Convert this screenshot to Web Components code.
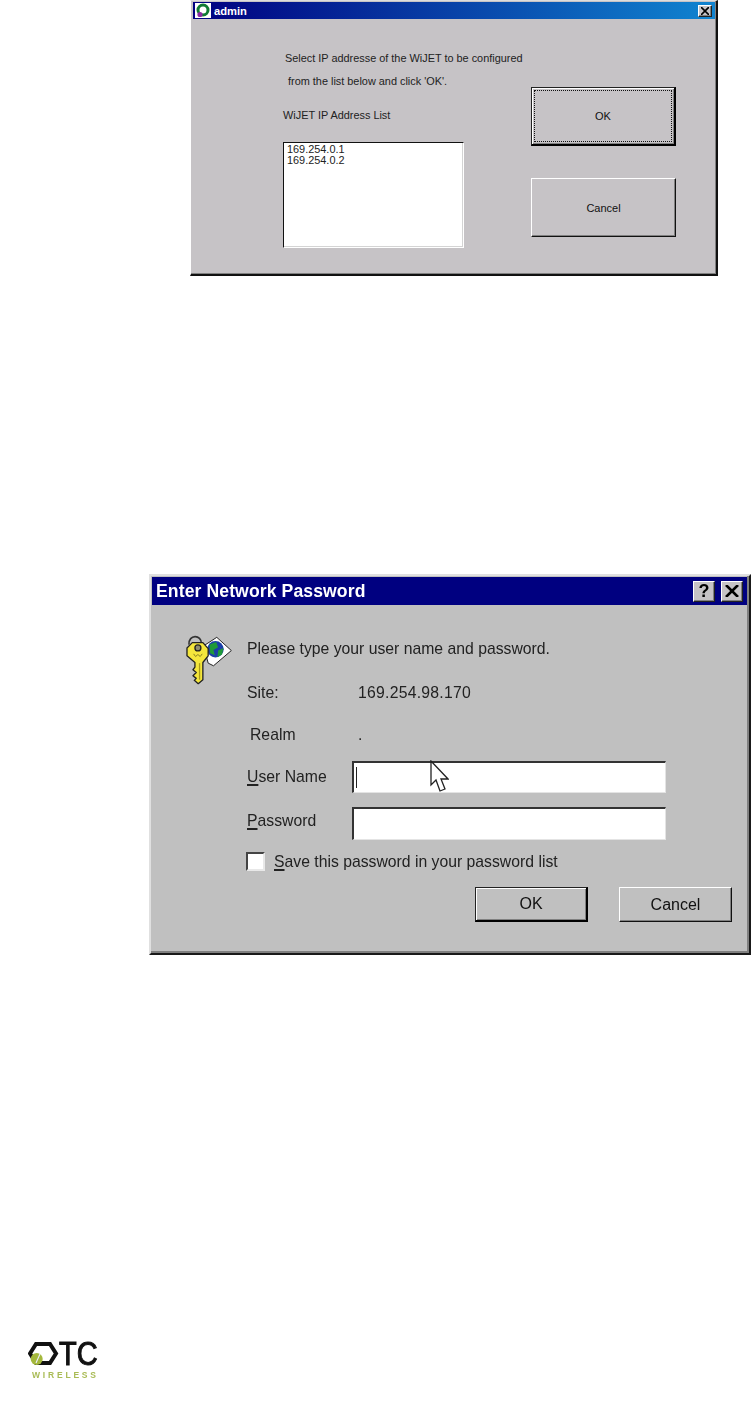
<!DOCTYPE html>
<html>
<head>
<meta charset="utf-8">
<title>Dialogs</title>
<style>
html, body { margin: 0; padding: 0; background: #fff; }
body { font-family: "Liberation Sans", Arial, sans-serif; color: #111; }
admin-dialog { margin-left: 190px; }
password-dialog { margin: 298px 0 0 149px; }
otc-logo { margin: 377px 0 0 28px; }
</style>
</head>
<body>
<admin-dialog></admin-dialog>
<password-dialog></password-dialog>
<otc-logo></otc-logo>

<script>
// small helper so every element gets an open shadow root from a string
function shadow(el, html) {
	const root = el.attachShadow({ mode: 'open' });
	root.innerHTML = html;
	return root;
}

class WinButton extends HTMLElement {
	connectedCallback() {
		shadow(this, `
		<style>
		:host {
			display: flex;
			align-items: center;
			justify-content: center;
			box-sizing: border-box;
			width: var(--w, 113px);
			height: var(--h, 35px);
			font-size: var(--fs, 16px);
			background: var(--face, #c0c0c0);
			color: #111;
			border: 1px solid;
			border-color: #fff #111 #111 #fff;
			box-shadow: inset -1px -1px 0 #808080;
		}
		:host([default]) {
			border-color: #222 #000 #000 #222;
			border-width: 1px 2px 2px 1px;
			box-shadow: inset 1px 1px 0 #fff, inset -1px -1px 0 #808080;
		}
		.focus {
			display: flex;
			align-items: center;
			justify-content: center;
			flex: 1;
			align-self: stretch;
			margin: 3px;
		}
		:host([focused]) .focus { outline: 1px dotted #111; }
		</style>
		<div class="focus"><slot></slot></div>`);
	}
}

class CaptionButton extends HTMLElement {
	connectedCallback() {
		shadow(this, `
		<style>
		:host {
			display: flex;
			align-items: center;
			justify-content: center;
			box-sizing: border-box;
			width: var(--w, 22px);
			height: var(--h, 21px);
			background: #c6c3c6;
			color: #000;
			font-size: 18px;
			font-weight: bold;
			letter-spacing: 0;
			border: 1px solid;
			border-color: #fff #222 #222 #fff;
			box-shadow: inset -1px -1px 0 #808080;
		}
		</style>
		<slot></slot>`);
	}
}

class TitleBar extends HTMLElement {
	connectedCallback() {
		shadow(this, `
		<style>
		:host {
			display: flex;
			align-items: center;
			box-sizing: border-box;
			height: var(--bar-h);
			padding: var(--bar-pad);
			background: var(--bar-bg);
			color: #fff;
			font-weight: bold;
			font-size: var(--bar-fs);
			letter-spacing: var(--bar-ls, 0);
		}
		.text { flex: 1; white-space: nowrap; }
		.tools { display: flex; gap: var(--bar-gap, 0); }
		</style>
		<slot name="icon"></slot>
		<div class="text"><slot></slot></div>
		<div class="tools"><slot name="tools"></slot></div>`);
	}
}

class ListBox extends HTMLElement {
	connectedCallback() {
		shadow(this, `
		<style>
		:host {
			display: block;
			box-sizing: border-box;
			width: 181px;
			height: 106px;
			padding: 1px 3px;
			background: #fff;
			border: 1px solid;
			border-color: #111 #fff #fff #111;
			box-shadow: inset -1px -1px 0 #d4d4d4;
			font-size: 10.9px;
			line-height: 11px;
			color: #222;
		}
		</style>
		<slot></slot>`);
	}
}

class TextField extends HTMLElement {
	connectedCallback() {
		shadow(this, `
		<style>
		:host {
			display: flex;
			align-items: center;
			box-sizing: border-box;
			width: 314px;
			height: var(--h, 32px);
			padding-left: 2px;
			background: #fff;
			border: 2px solid;
			border-color: #333 #e4e4e4 #e4e4e4 #333;
			border-right-width: 1px;
			border-bottom-width: 1px;
		}
		:host([caret])::before {
			content: "";
			width: 1px;
			height: 21px;
			background: #222;
		}
		</style>`);
	}
}

class CheckBox extends HTMLElement {
	connectedCallback() {
		shadow(this, `
		<style>
		:host {
			display: block;
			box-sizing: border-box;
			width: 19px;
			height: 19px;
			background: #fff;
			border: 2px solid;
			border-color: #444 #e8e8e8 #e8e8e8 #444;
		}
		</style>`);
	}
}

class KeyIcon extends HTMLElement {
	connectedCallback() {
		shadow(this, `
		<style>
		:host { display: block; width: 48px; height: 52px; }
		svg { display: block; }
		</style>
		<svg width="48" height="52" viewBox="30 10 145 155">
			<path d="M42 44 C40 12 80 12 80 42" fill="none" stroke="#333" stroke-width="5"/>
			<path d="M86 48 L126 22 L170 62 L116 108 L100 100 Z" fill="#fff" stroke="#222" stroke-width="3"/>
			<circle cx="122" cy="58" r="25" fill="#1a3fa8"/>
			<path d="M104 44 L124 36 L130 52 L116 60 L120 76 L106 70 Z M130 62 L146 54 L142 74 L128 82 Z" fill="#1f9a3a"/>
			<path d="M52 38 L84 38 L100 56 L100 78 L84 98 L84 150 L70 162 L58 152 L64 146 L54 138 L64 128 L54 120 L60 112 L60 98 L36 78 L36 54 Z" fill="#f4e63c" stroke="#222" stroke-width="4" stroke-linejoin="round"/>
			<circle cx="69" cy="54" r="9" fill="#8f8d70" stroke="#222" stroke-width="4"/>
			<path d="M56 72 L62 80 L69 74 L76 80 L82 72" fill="none" stroke="#8a8020" stroke-width="3"/>
			<path d="M74 100 L74 150" stroke="#a89a18" stroke-width="4"/>
		</svg>`);
	}
}

class OtcLogo extends HTMLElement {
	connectedCallback() {
		shadow(this, `
		<style>
		:host { display: block; width: 80px; height: 50px; }
		svg { display: block; filter: blur(.45px); }
		text { font-family: "Liberation Sans", sans-serif; }
		.wl { font-weight: bold; }
		</style>
		<svg width="80" height="50" viewBox="0 -10 80 50">
			<polygon points="8,2 22,2 28,11.5 22,21 8,21 2,11.5" fill="none" stroke="#111" stroke-width="4"/>
			<circle cx="8.7" cy="17" r="6" fill="#a4b83c"/>
			<path d="M8 21 L12 12" stroke="#eef" stroke-width="1.1"/>
			<text transform="translate(31 23) scale(1 1.15)" font-size="29" fill="#111" stroke="#111" stroke-width=".9">TC</text>
			<text class="wl" x="4" y="36" font-size="8.5" textLength="64" fill="#a9bb55">WIRELESS</text>
		</svg>`);
	}
}

class AdminDialog extends HTMLElement {
	connectedCallback() {
		shadow(this, `
		<style>
		:host {
			display: block;
			box-sizing: border-box;
			width: 528px;
			height: 276px;
			padding: 1px 1px 0 2px;
			background: #c6c3c6;
			border-top: 1px solid #ddd;
			border-left: 1px solid #fff;
			border-right: 2px solid #111;
			border-bottom: 2px solid #111;
			box-shadow: inset -1px -1px 0 #808080;
			font-size: 10.9px;
			color: #222;
			--bar-h: 17px;
			--bar-pad: 0 3px 0 2px;
			--bar-fs: 11.2px;
			--bar-bg: linear-gradient(90deg, #000080, #1084d0);
			--face: #c6c3c6;
			--fs: 11px;
		}
		.logo {
			width: 16px;
			height: 15px;
			margin-right: 3px;
			background: #fff;
		}
		.logo svg { display: block; }
		.body { display: flex; }
		.left { width: 181px; margin-left: 90px; padding-top: 33px; }
		.left div { height: 12px; line-height: 12px; white-space: nowrap; }
		.l1 { padding-left: 2px; }
		.l2 { padding-left: 5px; margin-top: 11px; }
		.l3 { margin-top: 22px; margin-bottom: 21px; }
		.right {
			display: flex;
			flex-direction: column;
			gap: 32px;
			margin-left: 67px;
			padding-top: 68px;
			--w: 145px;
			--h: 59px;
		}
		</style>
		<title-bar>
			<div slot="icon" class="logo">
				<svg width="16" height="15" viewBox="0 0 16 15">
					<circle cx="8" cy="7" r="5" fill="none" stroke="#0f7a33" stroke-width="3"/>
					<circle cx="5" cy="11.5" r="2.6" fill="#8a2aa0"/>
				</svg>
			</div>
			admin
			<caption-button slot="tools" style="--w:14px;--h:12px">
				<svg width="8" height="8" viewBox="0 0 8 8"><path d="M0 0 L8 8 M8 0 L0 8" stroke="#000" stroke-width="1.6"/></svg>
			</caption-button>
		</title-bar>
		<div class="body">
			<div class="left">
				<div class="l1">Select IP addresse of the WiJET to be configured</div>
				<div class="l2">from the list below and click 'OK'.</div>
				<div class="l3">WiJET IP Address List</div>
				<list-box>169.254.0.1<br>169.254.0.2</list-box>
			</div>
			<div class="right">
				<win-button default focused>OK</win-button>
				<win-button>Cancel</win-button>
			</div>
		</div>`);
	}
}

class PasswordDialog extends HTMLElement {
	connectedCallback() {
		shadow(this, `
		<style>
		:host {
			display: block;
			position: relative;
			box-sizing: border-box;
			width: 602px;
			height: 381px;
			padding: 1px 2px 0 1px;
			background: #c0c0c0;
			border-top: 2px solid #e0e0e0;
			border-left: 2px solid #e0e0e0;
			border-right: 2px solid #1a1a1a;
			border-bottom: 2px solid #1a1a1a;
			box-shadow: inset -2px -2px 0 #808080;
			filter: blur(.35px);
			font-size: 15.75px;
			color: #222;
			--bar-h: 28px;
			--bar-pad: 0 4px 0 4px;
			--bar-fs: 17.6px;
			--bar-ls: .1px;
			--bar-bg: #000080;
			--bar-gap: 6px;
		}
		u { text-decoration-thickness: 2px; text-underline-offset: 2px; }
		.body { display: flex; }
		key-icon { margin: 28px 14px 0 33px; }
		.main { display: flex; flex-direction: column; padding-top: 34px; }
		.row { display: grid; grid-template-columns: 105px auto; align-items: center; height: 20px; white-space: nowrap; }
		.site { margin-top: 24px; }
		.realm { margin-top: 22px; }
		.realm span:first-child { padding-left: 3px; }
		.val { padding-left: 6px; }
		.site .val { letter-spacing: .25px; }
		.user { height: 32px; margin-top: 16px; }
		.pass { height: 33px; margin-top: 14px; --h: 33px; }
		.pass span { padding-bottom: 6px; }
		.save { display: flex; align-items: center; gap: 9px; margin-top: 12px; height: 19px; margin-left: -1px; }
		.buttons { display: flex; gap: 31px; margin: 16px 0 0 228px; font-size: 16px; }
		.cursor { position: absolute; left: 279px; top: 184px; }
		</style>
		<title-bar>
			Enter Network Password
			<caption-button slot="tools">?</caption-button>
			<caption-button slot="tools">
				<svg width="14" height="12" viewBox="0 0 14 12"><path d="M1 0 L13 12 M13 0 L1 12" stroke="#000" stroke-width="2.6"/></svg>
			</caption-button>
		</title-bar>
		<div class="body">
			<key-icon></key-icon>
			<div class="main">
				<div class="row" style="display:block;line-height:20px">Please type your user name and password.</div>
				<div class="row site"><span>Site:</span><span class="val">169.254.98.170</span></div>
				<div class="row realm"><span>Realm</span><span class="val">.</span></div>
				<div class="row user"><span><u>U</u>ser Name</span><text-field caret></text-field></div>
				<div class="row pass"><span><u>P</u>assword</span><text-field></text-field></div>
				<div class="save"><check-box></check-box><span><u>S</u>ave this password in your password list</span></div>
				<div class="buttons"><win-button default>OK</win-button><win-button>Cancel</win-button></div>
			</div>
		</div>
		<svg class="cursor" width="19" height="33" viewBox="0 0 19 33">
			<path d="M1 1 L1 25 L6 20 L10 31 L15 29 L11 19 L18 19 Z" fill="#fff" stroke="#222" stroke-width="1.3" stroke-linejoin="miter"/>
		</svg>`);
	}
}

customElements.define('win-button', WinButton);
customElements.define('caption-button', CaptionButton);
customElements.define('title-bar', TitleBar);
customElements.define('list-box', ListBox);
customElements.define('text-field', TextField);
customElements.define('check-box', CheckBox);
customElements.define('key-icon', KeyIcon);
customElements.define('otc-logo', OtcLogo);
customElements.define('admin-dialog', AdminDialog);
customElements.define('password-dialog', PasswordDialog);
</script>
</body>
</html>
